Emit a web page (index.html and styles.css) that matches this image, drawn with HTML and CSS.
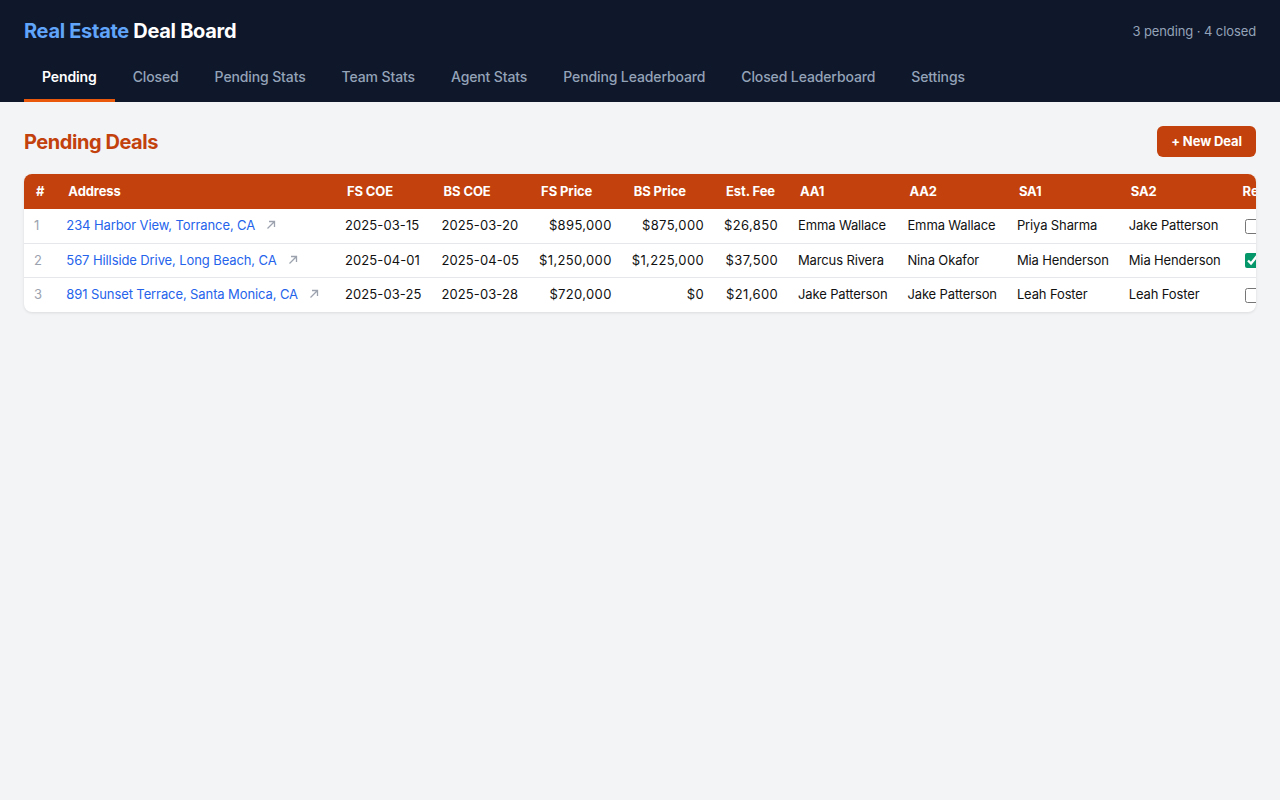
FILE: index.html
```html
<!DOCTYPE html>
<html lang="en">
<head>
  <meta charset="UTF-8">
  <title>Real Estate Deal Board</title>
  <link rel="stylesheet" href="styles.css">
</head>
<body>
<header class="topbar">
  <div class="topbar-row">
    <h1 class="brand"><span class="brand-accent">Real Estate</span> Deal Board</h1>
    <div class="counts">3 pending · 4 closed</div>
  </div>
  <nav class="tabs">
    <a class="tab active">Pending</a>
    <a class="tab">Closed</a>
    <a class="tab">Pending Stats</a>
    <a class="tab">Team Stats</a>
    <a class="tab">Agent Stats</a>
    <a class="tab">Pending Leaderboard</a>
    <a class="tab">Closed Leaderboard</a>
    <a class="tab">Settings</a>
  </nav>
</header>

<main class="content">
  <div class="section-head">
    <h2>Pending Deals</h2>
    <button class="btn-primary">+ New Deal</button>
  </div>

  <div class="table-card">
    <table class="deals">
      <thead>
        <tr>
          <th>#</th>
          <th>Address</th>
          <th>FS COE</th>
          <th>BS COE</th>
          <th>FS Price</th>
          <th>BS Price</th>
          <th>Est. Fee</th>
          <th>AA1</th>
          <th>AA2</th>
          <th>SA1</th>
          <th>SA2</th>
          <th>Reviewed</th>
          <th>Actions</th>
        </tr>
      </thead>
      <tbody>
        <tr>
          <td class="num">1</td>
          <td><a class="addr">234 Harbor View, Torrance, CA</a><span class="ext"><svg width="10" height="10" viewBox="0 0 10 10"><path d="M1.5 8.5 L8.5 1.5 M3 1.5 H8.5 V7" fill="none" stroke="currentColor" stroke-width="1.3"/></svg></span></td>
          <td class="date">2025-03-15</td>
          <td class="date">2025-03-20</td>
          <td class="money">$895,000</td>
          <td class="money">$875,000</td>
          <td class="money">$26,850</td>
          <td class="name">Emma Wallace</td>
          <td class="name">Emma Wallace</td>
          <td class="name">Priya Sharma</td>
          <td class="name">Jake Patterson</td>
          <td><input type="checkbox"></td>
          <td>Edit</td>
        </tr>
        <tr>
          <td class="num">2</td>
          <td><a class="addr">567 Hillside Drive, Long Beach, CA</a><span class="ext"><svg width="10" height="10" viewBox="0 0 10 10"><path d="M1.5 8.5 L8.5 1.5 M3 1.5 H8.5 V7" fill="none" stroke="currentColor" stroke-width="1.3"/></svg></span></td>
          <td class="date">2025-04-01</td>
          <td class="date">2025-04-05</td>
          <td class="money">$1,250,000</td>
          <td class="money">$1,225,000</td>
          <td class="money">$37,500</td>
          <td class="name">Marcus Rivera</td>
          <td class="name">Nina Okafor</td>
          <td class="name">Mia Henderson</td>
          <td class="name">Mia Henderson</td>
          <td><input type="checkbox" checked></td>
          <td>Edit</td>
        </tr>
        <tr>
          <td class="num">3</td>
          <td><a class="addr">891 Sunset Terrace, Santa Monica, CA</a><span class="ext"><svg width="10" height="10" viewBox="0 0 10 10"><path d="M1.5 8.5 L8.5 1.5 M3 1.5 H8.5 V7" fill="none" stroke="currentColor" stroke-width="1.3"/></svg></span></td>
          <td class="date">2025-03-25</td>
          <td class="date">2025-03-28</td>
          <td class="money">$720,000</td>
          <td class="money">$0</td>
          <td class="money">$21,600</td>
          <td class="name">Jake Patterson</td>
          <td class="name">Jake Patterson</td>
          <td class="name">Leah Foster</td>
          <td class="name">Leah Foster</td>
          <td><input type="checkbox"></td>
          <td>Edit</td>
        </tr>
      </tbody>
    </table>
  </div>
</main>
</body>
</html>
```

FILE: styles.css
```css
body {
  margin: 0;
  font-family: Inter, "Noto Sans", sans-serif;
  background-color: #f3f4f6;
  color: #111827;
}
.topbar {
  background-color: #0f172a;
  padding: 16px 24px 0;
}
.topbar-row {
  display: flex;
  justify-content: space-between;
  align-items: center;
  height: 30px;
  margin-bottom: 9px;
}
.brand {
  margin: 0;
  font-size: 20px;
  font-weight: 700;
  color: #fff;
  letter-spacing: -0.3px;
}
.brand-accent {
  color: #60a5fa;
}
.counts {
  font-size: 13px;
  color: #94a3b8;
  letter-spacing: -0.1px;
}
.tabs {
  display: flex;
}
.tab {
  padding: 12px 18px;
  line-height: 20px;
  font-size: 14px;
  font-weight: 500;
  color: #94a3b8;
  letter-spacing: -0.12px;
  border-bottom: 3px solid transparent;
  cursor: pointer;
}
.tab.active {
  color: #fff;
  font-weight: 600;
  border-bottom-color: #ea580c;
}
.content {
  padding: 24px;
}
.section-head {
  display: flex;
  justify-content: space-between;
  align-items: center;
  margin-bottom: 17px;
}
.section-head h2 {
  margin: 0;
  font-size: 20px;
  font-weight: 700;
  color: #c2410c;
  letter-spacing: -0.45px;
}
.btn-primary {
  background-color: #c2410c;
  color: #fff;
  border: none;
  border-radius: 6px;
  padding: 7px 14px;
  line-height: 17px;
  font-family: inherit;
  font-size: 13px;
  font-weight: 700;
  letter-spacing: -0.1px;
  cursor: pointer;
}
.table-card {
  background-color: #fff;
  border-radius: 8px;
  box-shadow: 0 1px 3px rgba(0,0,0,0.1);
  overflow: hidden;
}
.deals {
  border-collapse: collapse;
  font-size: 13px;
  letter-spacing: -0.1px;
  white-space: nowrap;
}
.deals th {
  background-color: #c2410c;
  color: #fff;
  font-weight: 700;
  text-align: left;
  padding: 9px 12px;
  line-height: 17px;
}
.deals td {
  padding: 8px 10px;
  line-height: 17.5px;
  border-bottom: 1px solid #e5e7eb;
  color: #111;
}
.deals tbody tr:last-child td {
  border-bottom: none;
}
.deals td.num {
  color: #9ca3af;
}
.deals td.date {
  letter-spacing: 0.1px;
}
.deals td.money {
  text-align: right;
  letter-spacing: 0.35px;
}
.deals td.name {
  letter-spacing: -0.13px;
}
.deals td .addr {
  color: #2563eb;
  cursor: pointer;
}
.ext {
  display: inline-block;
  margin: 0 6px 0 11px;
  color: #9ca3af;
}
.ext svg {
  display: block;
}
.deals input[type="checkbox"] {
  margin: 0 3px 0 4px;
  width: 15px;
  height: 15px;
  accent-color: #059669;
  vertical-align: middle;
}
```
